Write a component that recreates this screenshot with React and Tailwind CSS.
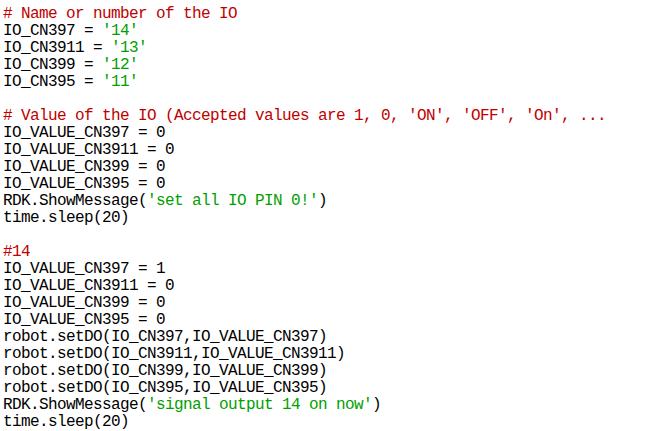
const lines = [
  [['c', '# Name or number of the IO']],
  [['t', 'IO_CN397 = '], ['s', "'14'"]],
  [['t', 'IO_CN3911 = '], ['s', "'13'"]],
  [['t', 'IO_CN399 = '], ['s', "'12'"]],
  [['t', 'IO_CN395 = '], ['s', "'11'"]],
  [],
  [['c', "# Value of the IO (Accepted values are 1, 0, 'ON', 'OFF', 'On', ..."]],
  [['t', 'IO_VALUE_CN397 = 0']],
  [['t', 'IO_VALUE_CN3911 = 0']],
  [['t', 'IO_VALUE_CN399 = 0']],
  [['t', 'IO_VALUE_CN395 = 0']],
  [['t', 'RDK.ShowMessage('], ['s', "'set all IO PIN 0!'"], ['t', ')']],
  [['t', 'time.sleep(20)']],
  [],
  [['c', '#14']],
  [['t', 'IO_VALUE_CN397 = 1']],
  [['t', 'IO_VALUE_CN3911 = 0']],
  [['t', 'IO_VALUE_CN399 = 0']],
  [['t', 'IO_VALUE_CN395 = 0']],
  [['t', 'robot.setDO(IO_CN397,IO_VALUE_CN397)']],
  [['t', 'robot.setDO(IO_CN3911,IO_VALUE_CN3911)']],
  [['t', 'robot.setDO(IO_CN399,IO_VALUE_CN399)']],
  [['t', 'robot.setDO(IO_CN395,IO_VALUE_CN395)']],
  [['t', 'RDK.ShowMessage('], ['s', "'signal output 14 on now'"], ['t', ')']],
  [['t', 'time.sleep(20)']],
];

const tone = {
  c: 'text-[#c00000]',
  s: 'text-[#00a000]',
  t: 'text-black',
};

export default function App() {
  return (
    <div className="min-h-[431px] w-[646px] overflow-hidden bg-white pl-[3px] pt-[6px] font-['Liberation_Mono',monospace] text-[16px] leading-[17px] tracking-[-0.6px]">
      {lines.map((parts, i) => (
        <div key={i} className="h-[17px] whitespace-pre">
          {parts.map(([k, txt], j) => (
            <span key={j} className={tone[k]}>{txt}</span>
          ))}
        </div>
      ))}
    </div>
  );
}
